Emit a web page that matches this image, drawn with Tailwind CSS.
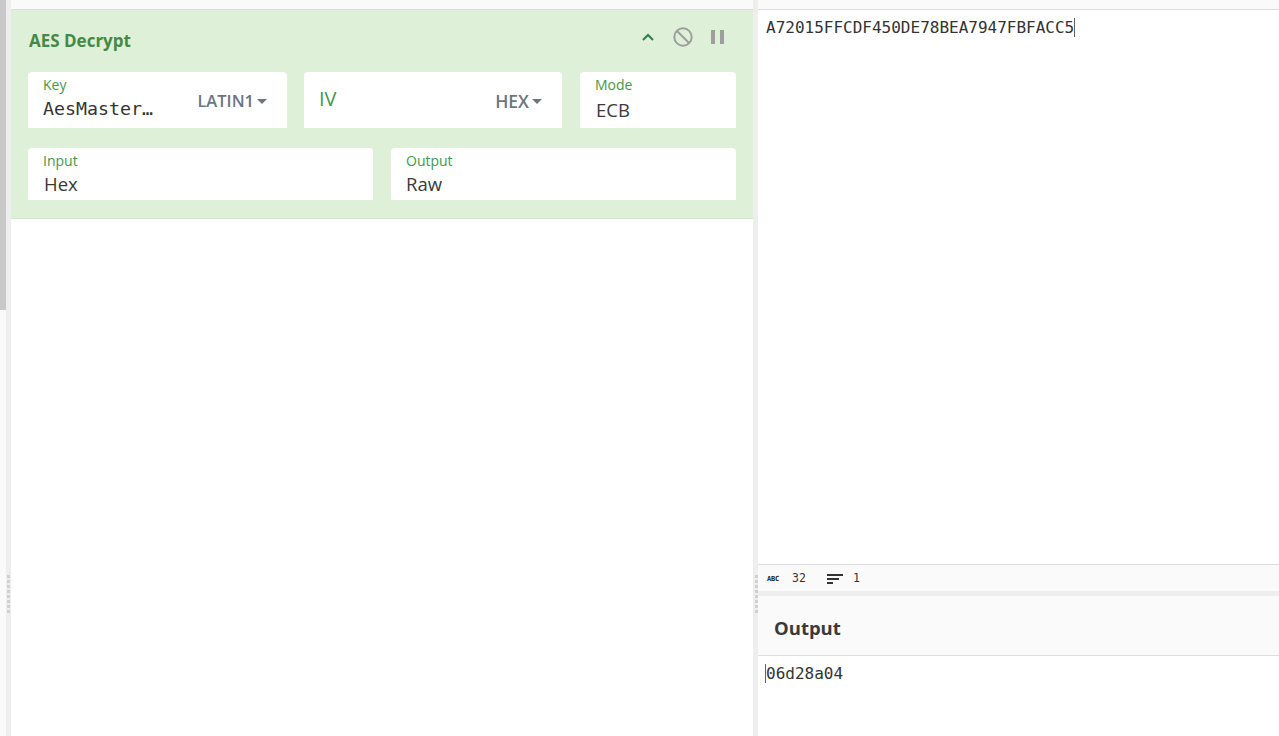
<!DOCTYPE html>
<html lang="en">
<head>
  <meta charset="UTF-8">
  <title>AES Decrypt</title>
  <script src="https://cdn.jsdelivr.net/npm/@tailwindcss/browser@4"></script>
</head>
<body class="h-[736px] overflow-hidden bg-white font-['Open_Sans','Noto_Sans',sans-serif] text-[#3a3a3a]">
  <div class="flex h-[736px] w-[1279px]">
    <!-- scrollbar -->
    <div class="w-[6px] bg-[#fafafa]"><div class="h-[310px] bg-[#c8c8c8]"></div></div>

    <!-- gutter -->
    <div class="relative w-[5px] bg-[#eeeeee]">
      <div class="absolute top-[575px] left-[1px] flex flex-col gap-[2px]">
        <i class="block h-[3px] w-[3px] bg-[#d0d0d0]"></i><i class="block h-[3px] w-[3px] bg-[#d0d0d0]"></i><i class="block h-[3px] w-[3px] bg-[#d0d0d0]"></i><i class="block h-[3px] w-[3px] bg-[#d0d0d0]"></i><i class="block h-[3px] w-[3px] bg-[#d0d0d0]"></i><i class="block h-[3px] w-[3px] bg-[#d0d0d0]"></i><i class="block h-[3px] w-[3px] bg-[#d0d0d0]"></i><i class="block h-[3px] w-[3px] bg-[#d0d0d0]"></i>
      </div>
    </div>

    <!-- recipe -->
    <div class="flex w-[742px] flex-col">
      <div class="h-[10px] border-b border-[#dddddd] bg-[#fafafa]"></div>
      <section class="h-[209px] border-b border-[#d3e8c8] bg-[#dff0d8] pr-[17px] pl-[17px]">
        <div class="flex h-[62px] items-center justify-between">
          <h2 class="pl-[1px] text-[17px] font-bold text-[#438a45]">AES Decrypt</h2>
          <div class="mr-[12px] mb-[8px] flex items-center">
            <svg width="14" height="10" viewBox="0 0 14 10" fill="none" stroke="#2e7d4f" stroke-width="2" class="mr-[17px]"><path d="M2 8l5-5 5 5"/></svg>
            <svg width="22" height="22" viewBox="0 0 22 22" fill="none" stroke="#9e9e9e" stroke-width="2" class="mr-[17px]"><circle cx="11" cy="11" r="8.7"/><path d="M5 5l12 12"/></svg>
            <svg width="13" height="14" viewBox="0 0 13 14" fill="#9e9e9e"><rect x="0" y="0" width="4" height="14"/><rect x="9" y="0" width="4" height="14"/></svg>
          </div>
        </div>

        <div class="flex gap-[17px]">
          <div class="relative h-[56px] w-[259px] rounded-t-[4px] bg-white pl-[15px]">
            <div class="pt-[4px] text-[14px] leading-[18px] text-[#43974a]">Key</div>
            <div class="mt-[1px] font-['DejaVu_Sans_Mono',monospace] text-[18.3px] leading-[28px] text-[#333]">AesMaster…</div>
            <div class="absolute top-[17px] right-[20px] flex items-center text-[16.5px] leading-[24px] font-semibold text-[#6c757d]">LATIN1<i class="ml-[3px] h-0 w-0 border-x-[5px] border-t-[5px] border-x-transparent border-t-[#6c757d]"></i></div>
          </div>
          <div class="relative mr-[1px] h-[56px] w-[258px] rounded-t-[4px] bg-white pl-[15px]">
            <div class="pt-[15px] text-[20px] leading-[24px] text-[#43974a]">IV</div>
            <div class="absolute top-[17px] right-[20px] flex items-center text-[17.5px] leading-[24px] font-semibold text-[#6c757d]">HEX<i class="ml-[3px] h-0 w-0 border-x-[5px] border-t-[5px] border-x-transparent border-t-[#6c757d]"></i></div>
          </div>
          <div class="h-[56px] w-[156px] rounded-t-[4px] bg-white pl-[15px]">
            <div class="pt-[4px] text-[14px] leading-[18px] text-[#43974a]">Mode</div>
            <div class="mt-[2px] pl-[1px] text-[18.5px] leading-[28px]">ECB</div>
          </div>
        </div>

        <div class="mt-[20px] flex gap-[18px]">
          <div class="h-[52px] w-[345px] rounded-t-[4px] bg-white pl-[15px]">
            <div class="pt-[4px] text-[14px] leading-[18px] text-[#43974a]">Input</div>
            <div class="pl-[1px] text-[18.5px] leading-[28px]">Hex</div>
          </div>
          <div class="h-[52px] w-[345px] rounded-t-[4px] bg-white pl-[15px]">
            <div class="pt-[4px] text-[14px] leading-[18px] text-[#43974a]">Output</div>
            <div class="text-[18.5px] leading-[28px]">Raw</div>
          </div>
        </div>
      </section>
    </div>

    <!-- gutter -->
    <div class="relative w-[5px] bg-[#eeeeee]">
      <div class="absolute top-[575px] left-[2px] flex flex-col gap-[2px]">
        <i class="block h-[3px] w-[3px] bg-[#d0d0d0]"></i><i class="block h-[3px] w-[3px] bg-[#d0d0d0]"></i><i class="block h-[3px] w-[3px] bg-[#d0d0d0]"></i><i class="block h-[3px] w-[3px] bg-[#d0d0d0]"></i><i class="block h-[3px] w-[3px] bg-[#d0d0d0]"></i><i class="block h-[3px] w-[3px] bg-[#d0d0d0]"></i><i class="block h-[3px] w-[3px] bg-[#d0d0d0]"></i><i class="block h-[3px] w-[3px] bg-[#d0d0d0]"></i>
      </div>
    </div>

    <!-- input / output -->
    <div class="flex w-[521px] flex-col font-['DejaVu_Sans_Mono',monospace] text-[16px] text-[#333]">
      <div class="h-[10px] border-b border-[#dddddd] bg-[#fafafa]"></div>
      <div class="h-[554px] px-[8px] pt-[8px] leading-[19px]"><span class="border-r border-[#5a6270]">A72015FFCDF450DE78BEA7947FBFACC5</span></div>
      <div class="flex h-[27px] items-center border-t border-[#dddddd] bg-[#fafafa] pt-[1px] pl-[9px] text-[11.5px]">
        <span class="w-[16px] text-[7px] leading-[8px] font-bold tracking-[-0.2px] text-[#222]">ABC</span>
        <span class="ml-[9px] w-[35px]">32</span>
        <svg width="16" height="12" viewBox="0 0 16 12" fill="#333"><rect y="1" width="16" height="2"/><rect y="5" width="12" height="2"/><rect y="9" width="6" height="2"/></svg>
        <span class="ml-[10px]">1</span>
      </div>
      <div class="h-[5px] bg-[#eeeeee]"></div>
      <div class="flex h-[60px] items-center border-b border-[#dddddd] bg-[#fafafa] pt-[5px] pl-[16px] font-['Open_Sans',sans-serif] text-[18.5px] font-bold text-[#3a3a3a]">Output</div>
      <div class="px-[8px] pt-[8px] leading-[19px]"><span class="-ml-[1px] border-l border-[#5a6270]">06d28a04</span></div>
    </div>
  </div>
</body>
</html>
